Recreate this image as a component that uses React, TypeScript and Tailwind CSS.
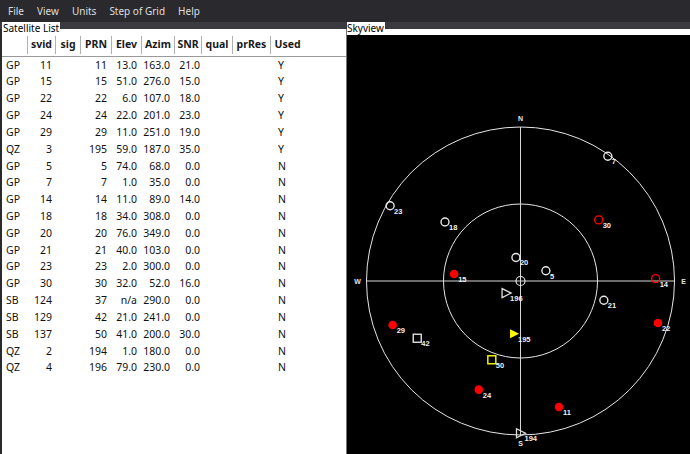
import React from 'react';

type Sat = {
  sys: string;
  svid: number;
  prn: number;
  elev: number | null;
  azim: number;
  snr: number;
  used: boolean;
};

const sats: Sat[] = [
  { sys: 'GP', svid: 11, prn: 11, elev: 13, azim: 163, snr: 21, used: true },
  { sys: 'GP', svid: 15, prn: 15, elev: 51, azim: 276, snr: 15, used: true },
  { sys: 'GP', svid: 22, prn: 22, elev: 6, azim: 107, snr: 18, used: true },
  { sys: 'GP', svid: 24, prn: 24, elev: 22, azim: 201, snr: 23, used: true },
  { sys: 'GP', svid: 29, prn: 29, elev: 11, azim: 251, snr: 19, used: true },
  { sys: 'QZ', svid: 3, prn: 195, elev: 59, azim: 187, snr: 35, used: true },
  { sys: 'GP', svid: 5, prn: 5, elev: 74, azim: 68, snr: 0, used: false },
  { sys: 'GP', svid: 7, prn: 7, elev: 1, azim: 35, snr: 0, used: false },
  { sys: 'GP', svid: 14, prn: 14, elev: 11, azim: 89, snr: 14, used: false },
  { sys: 'GP', svid: 18, prn: 18, elev: 34, azim: 308, snr: 0, used: false },
  { sys: 'GP', svid: 20, prn: 20, elev: 76, azim: 349, snr: 0, used: false },
  { sys: 'GP', svid: 21, prn: 21, elev: 40, azim: 103, snr: 0, used: false },
  { sys: 'GP', svid: 23, prn: 23, elev: 2, azim: 300, snr: 0, used: false },
  { sys: 'GP', svid: 30, prn: 30, elev: 32, azim: 52, snr: 16, used: false },
  { sys: 'SB', svid: 124, prn: 37, elev: null, azim: 290, snr: 0, used: false },
  { sys: 'SB', svid: 129, prn: 42, elev: 21, azim: 241, snr: 0, used: false },
  { sys: 'SB', svid: 137, prn: 50, elev: 41, azim: 200, snr: 30, used: false },
  { sys: 'QZ', svid: 2, prn: 194, elev: 1, azim: 180, snr: 0, used: false },
  { sys: 'QZ', svid: 4, prn: 196, elev: 79, azim: 230, snr: 0, used: false },
];

const headers = ['', 'svid', 'sig', 'PRN', 'Elev', 'Azim', 'SNR', 'qual', 'prRes', 'Used'];

// svg origin sits at page (347, 35)
const CX = 173.5;
const CY = 246;
const R = 154;

function SkyMarker({ s }: { s: Sat }) {
  if (s.elev === null) return null;
  const r = (R * (90 - s.elev)) / 90;
  const a = (s.azim * Math.PI) / 180;
  const x = CX + r * Math.sin(a);
  const y = CY - r * Math.cos(a);
  let mark: React.ReactNode;
  if (s.sys === 'GP') {
    if (s.used) mark = <circle cx={x} cy={y} r={4.3} fill="#ff0000" />;
    else
      mark = (
        <circle cx={x} cy={y} r={4} fill="none" stroke={s.snr > 0 ? '#ff0000' : '#e8e8e8'} strokeWidth={1.4} />
      );
  } else if (s.sys === 'SB') {
    mark = (
      <rect x={x - 4} y={y - 4} width={8} height={8} fill="none" stroke={s.snr > 0 ? '#ffff00' : '#e0e0e0'} strokeWidth={1.4} />
    );
  } else {
    const pts = `${x - 4},${y - 4.5} ${x - 4},${y + 4.5} ${x + 5},${y}`;
    mark = s.used ? (
      <polygon points={pts} fill="#ffff00" />
    ) : (
      <polygon points={pts} fill="none" stroke="#e0e0e0" strokeWidth={1.3} />
    );
  }
  return (
    <g>
      {mark}
      <text x={x + 4} y={y + 8} fontSize={7.5} fill="#f0f0f0" fontWeight="bold">
        {s.prn}
      </text>
    </g>
  );
}

export default function App() {
  return (
    <div
      className="w-[690px] h-[454px] overflow-hidden flex flex-col bg-[#2a2a2e]"
      style={{ fontFamily: '"Noto Sans", "DejaVu Sans", sans-serif' }}
    >
      {/* menu bar */}
      <div className="h-[22px] flex items-center gap-[13px] pl-[8px] text-[10px] text-[#dedede]">
        <span>File</span>
        <span>View</span>
        <span>Units</span>
        <span>Step of Grid</span>
        <span>Help</span>
      </div>

      <div className="flex-1 flex bg-[#3a3a3f] pt-[7px] min-h-0">
        {/* Satellite List */}
        <div className="relative w-[347px] bg-white border-l-2 border-[#2a2a2e] flex flex-col">
          <span className="absolute left-[0px] -top-[7px] bg-white text-[10px] leading-[12px] px-[1px] text-black">
            Satellite List
          </span>
          <div className="h-[5px]" />
          <div className="grid grid-cols-[25px_28px_25px_31px_30px_33px_27px_31px_38px_34px] h-[23px] border-b border-[#9a9a9a] text-[10.5px] font-bold text-[#1a1a1a]">
            {headers.map((h, i) => (
              <div
                key={i}
                className={`flex items-center justify-center ${i > 0 && i < 10 ? 'border-l border-[#b0b0b0] my-[2px]' : ''}`}
              >
                {h}
              </div>
            ))}
          </div>
          <div className="text-[10.5px] text-[#111]">
            {sats.map((s) => (
              <div
                key={s.sys + s.svid}
                className="grid grid-cols-[25px_28px_25px_31px_30px_33px_27px_31px_38px_34px] h-[16.83px] items-center"
              >
                <div className="pl-[4px]">{s.sys}</div>
                <div className="text-right pr-[3px]">{s.svid}</div>
                <div />
                <div className="text-right pr-[4px]">{s.prn}</div>
                <div className="text-right pr-[4px]">{s.elev === null ? 'n/a' : s.elev.toFixed(1)}</div>
                <div className="text-right pr-[4px]">{s.azim.toFixed(1)}</div>
                <div className="text-right pr-[1px]">{s.snr.toFixed(1)}</div>
                <div />
                <div />
                <div className="pl-[8px]">{s.used ? 'Y' : 'N'}</div>
              </div>
            ))}
          </div>
        </div>

        {/* Skyview */}
        <div className="relative flex-1 flex flex-col border-l border-[#777]">
          <span className="absolute left-0 -top-[7px] bg-white text-[10px] leading-[12px] text-black pr-[1px]">
            Skyview
          </span>
          <div className="h-[6px] bg-white" />
          <div className="flex-1 bg-black overflow-hidden">
            <svg width={343} height={419} className="block" style={{ fontFamily: '"Liberation Sans", sans-serif' }}>
              <circle cx={CX} cy={CY} r={R} fill="none" stroke="#e6e6e6" strokeWidth={1} />
              <circle cx={CX} cy={CY} r={R / 2} fill="none" stroke="#e6e6e6" strokeWidth={1} />
              <line x1={CX - R} y1={CY} x2={CX + R} y2={CY} stroke="#d8d8d8" strokeWidth={1} />
              <line x1={CX} y1={CY - R} x2={CX} y2={CY + R} stroke="#d8d8d8" strokeWidth={1} />
              <circle cx={CX} cy={CY} r={4.5} fill="none" stroke="#e6e6e6" strokeWidth={1.2} />
              <g fontSize={7} fill="#e6e6e6" fontWeight="bold" textAnchor="middle">
                <text x={CX} y={CY - R - 6}>N</text>
                <text x={CX} y={CY + R + 11}>S</text>
                <text x={CX - R - 9} y={CY + 2.5}>W</text>
                <text x={CX + R + 9} y={CY + 2.5}>E</text>
              </g>
              {sats.map((s) => (
                <SkyMarker key={s.sys + s.svid} s={s} />
              ))}
            </svg>
          </div>
        </div>
      </div>
    </div>
  );
}
